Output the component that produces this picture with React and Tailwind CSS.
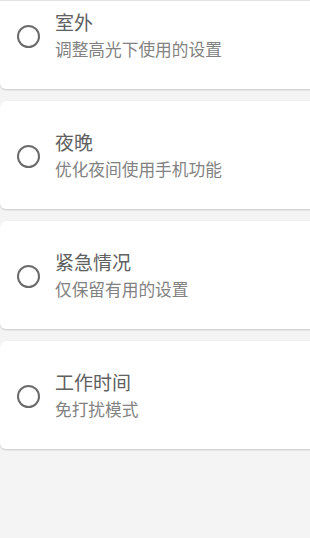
import React from "react";

const items = [
  { title: "室外", sub: "调整高光下使用的设置" },
  { title: "夜晚", sub: "优化夜间使用手机功能" },
  { title: "紧急情况", sub: "仅保留有用的设置" },
  { title: "工作时间", sub: "免打扰模式" },
];

function Card({ title, sub, first }) {
  return (
    <div
      className={`${first ? "-mt-[19px]" : ""} h-[108px] -mr-[10px] rounded-[6px] bg-white shadow-[0_1px_2px_rgba(0,0,0,0.18)] flex items-center pl-[17px]`}
    >
      <div className="w-[23px] h-[23px] rounded-full border-[2.5px] border-[#6b6b6b] shrink-0 mt-[2px]" />
      <div className="ml-[15px] flex flex-col">
        <div className="text-[19px] leading-[24px] text-[#606060]">{title}</div>
        <div className="mt-[4px] text-[16.7px] leading-[22px] text-[#828282]">{sub}</div>
      </div>
    </div>
  );
}

export default function App() {
  return (
    <div
      className="w-[310px] h-[538px] overflow-hidden bg-[#f4f4f4] relative"
      style={{ fontFamily: '"Noto Sans CJK SC", "Noto Sans", sans-serif' }}
    >
      <div className="flex flex-col gap-[12px]">
        {items.map((it, i) => (
          <Card key={i} {...it} first={i === 0} />
        ))}
      </div>
      <div className="absolute top-0 left-0 right-0 h-[1px] bg-[#e2e2e2]" />
    </div>
  );
}
